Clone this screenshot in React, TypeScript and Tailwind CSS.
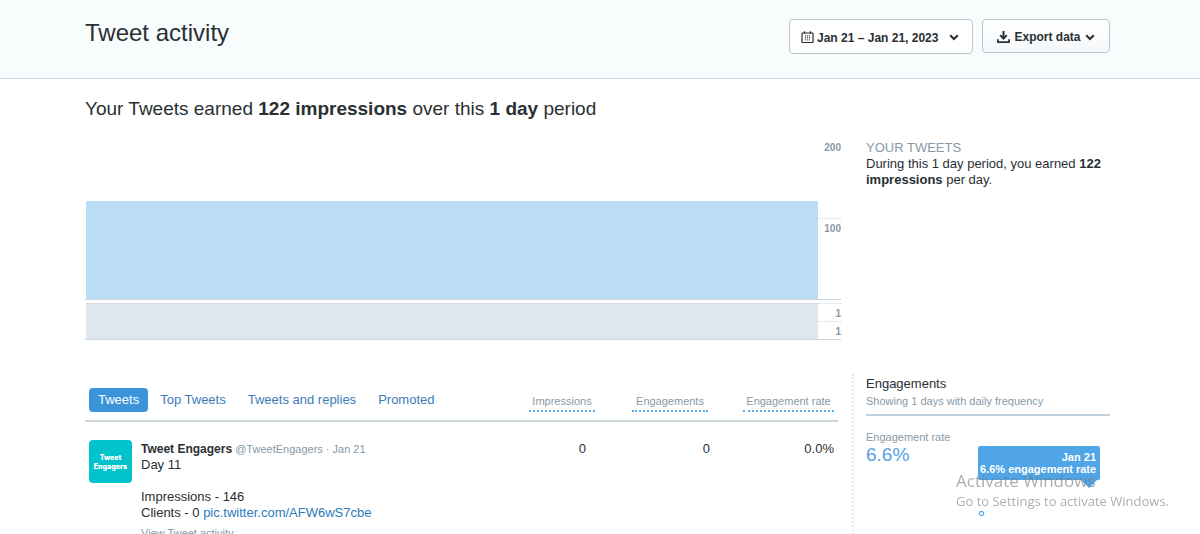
import React from 'react';

const tabs = ['Tweets', 'Top Tweets', 'Tweets and replies', 'Promoted'];

const CalendarIcon = () => (
  <svg width="13" height="13" viewBox="0 0 13 13" fill="none" stroke="#292f33" aria-hidden="true">
    <rect x="1" y="2" width="11" height="9.5" rx="0.6" strokeWidth="1.2" />
    <path d="M3.5 0.3v2.4M9.5 0.3v2.4" strokeWidth="1.2" />
    <path d="M4.5 4v6M6.5 4v6M8.5 4v6" stroke="#5d6468" strokeWidth="1.1" strokeDasharray="1.4 0.7" />
  </svg>
);

const DownloadIcon = () => (
  <svg width="13" height="13" viewBox="0 0 13 13" fill="none" stroke="#292f33" aria-hidden="true">
    <path d="M6.5 0v7.4" strokeWidth="2" />
    <path d="M3.2 4.2l3.3 3.4 3.3-3.4" strokeWidth="1.9" />
    <path d="M0.9 8.2v2.9h11.2V8.2" strokeWidth="1.8" strokeLinejoin="round" />
  </svg>
);

const Chevron = () => (
  <svg width="10" height="7" viewBox="0 0 10 7" fill="none" stroke="#292f33" aria-hidden="true">
    <path d="M1.2 1.2L5 5l3.8-3.8" strokeWidth="2" />
  </svg>
);

const Header = () => (
  <header className="border-b border-[#d5dde6] bg-[#f8fcfd]">
    <div className="mx-auto flex h-[78px] max-w-[1030px] items-start justify-between pr-[5px]">
      <h1 className="pt-[18px] text-[24px] leading-[30px]">Tweet activity</h1>
      <div className="flex items-start gap-[9px] pt-[19px] text-[12px] font-bold">
        <button className="flex h-[35px] w-[184px] items-center rounded-[4px] border border-[#b9c5ce] bg-white pl-[11px] pt-[2px]">
          <CalendarIcon />
          <span className="ml-[3px] mr-[11px]">Jan 21 – Jan 21, 2023</span>
          <Chevron />
        </button>
        <button className="flex h-[34px] w-[128px] items-center justify-center gap-[4px] rounded-[4px] border border-[#b9c5ce] bg-linear-to-b from-white to-[#f5f8fa] pt-[2px]">
          <DownloadIcon />
          Export data
          <Chevron />
        </button>
      </div>
    </div>
  </header>
);

const Chart = () => (
  <div className="mr-[11px] text-right text-[10px] font-bold leading-[12px] text-[#8899a6]">
    {/* impressions */}
    <div className="flex h-[162px] border-b border-[#ccd6dd] pl-px">
      <div className="flex flex-1 items-end">
        <div className="h-[98px] w-full bg-[#bbddf6]" />
      </div>
      <div className="w-[23px]">
        <div className="h-[80px] pt-[4px]">200</div>
        <div className="border-t border-dotted border-[#ccd6dd] pt-[4px]">100</div>
      </div>
    </div>
    {/* tweets */}
    <div className="mt-[3px] flex h-[37px] border-b border-[#ccd6dd] pl-px">
      <div className="flex-1 border-t border-dotted border-[#ccd6dd] bg-[#dfe6ed]" />
      <div className="w-[23px]">
        <div className="h-[18px] border-t border-dotted border-[#ccd6dd] pt-[4px]">1</div>
        <div className="border-t border-dotted border-[#ccd6dd] pt-[4px]">1</div>
      </div>
    </div>
  </div>
);

const headLabel =
  'inline-block whitespace-nowrap border-b-2 border-dotted border-[#55acee] text-center text-[11px] leading-[18px]';

const TweetTable = () => (
  <table className="w-full table-fixed border-collapse">
    <colgroup>
      <col />
      <col className="w-[110px]" />
      <col className="w-[115px]" />
      <col className="w-[128px]" />
    </colgroup>
    <thead>
      <tr className="h-[47px] border-b-2 border-[#ccd6dd] text-[#8899a6]">
        <th className="p-0 pl-[4px] pt-[5px] text-left font-normal">
          <nav className="flex items-center gap-[22px] whitespace-nowrap text-[13px] leading-[24px] text-[#3b7cb8]">
            {tabs.map((tab, i) => (
              <a
                key={tab}
                href="#"
                className={i === 0 ? '-mr-[10px] rounded-[4px] bg-[#3b94d9] px-[9px] text-white' : ''}
              >
                {tab}
              </a>
            ))}
          </nav>
        </th>
        <th className="p-0 pt-[5px] text-right font-normal">
          <span className={`${headLabel} w-[66px]`}>Impressions</span>
        </th>
        <th className="p-0 pr-[2px] pt-[5px] text-right font-normal">
          <span className={`${headLabel} w-[76px]`}>Engagements</span>
        </th>
        <th className="p-0 pr-[4px] pt-[5px] text-right font-normal">
          <span className={`${headLabel} w-[91px]`}>Engagement rate</span>
        </th>
      </tr>
    </thead>
    <tbody>
      <tr className="align-top text-[13px] leading-[20px]">
        <td className="pl-[4px] pt-[18px]">
          <div className="flex gap-[9px]">
            <div
              className="flex h-[43px] w-[43px] flex-col items-center justify-center rounded-[4px] bg-[#00c3cb] text-[7px] font-black leading-[9px] text-white"
              style={{ fontFamily: 'Inter, Lato, sans-serif' }}
            >
              <span>Tweet</span>
              <span>Engagers</span>
            </div>
            <div className="whitespace-nowrap pt-px text-[13px] leading-[16px]">
              <div className="text-[11px] text-[#8899a6]">
                <strong className="text-[12px] text-[#292f33]">Tweet Engagers</strong> @TweetEngagers · Jan 21
              </div>
              <p>Day 11</p>
              <p className="mt-[16px]">Impressions - 146</p>
              <p>
                Clients - 0 <a href="#" className="text-[#2b7bb9]">pic.twitter.com/AFW6wS7cbe</a>
              </p>
              <a href="#" className="mt-[4px] block text-[11px] text-[#8899a6]">View Tweet activity</a>
            </div>
          </div>
        </td>
        <td className="pr-[9px] pt-[17px] text-right">0</td>
        <td className="pt-[17px] text-right">0</td>
        <td className="pr-[4px] pt-[17px] text-right">0.0%</td>
      </tr>
    </tbody>
  </table>
);

const Engagements = () => (
  <aside className="border-l-2 border-dotted border-[#e1e8ed] pl-[12px]">
    <h3 className="pt-px text-[13px] leading-[18px]">Engagements</h3>
    <p className="border-b-2 border-[#c0d0dc] pb-[5px] text-[11px] leading-[16px] text-[#8899a6]">
      Showing 1 days with daily frequency
    </p>
    <div className="flex justify-between pt-[12px]">
      <div>
        <div className="text-[11px] leading-[18px] text-[#8899a6]">Engagement rate</div>
        <div className="text-[19px] leading-[18px] text-[#55a0e6]">6.6%</div>
      </div>
      <div className="relative mr-[10px] mt-[18px] h-[71px] w-[122px]">
        <div className="rounded-[2px] bg-[#50a5e6] py-[5px] pl-[2px] pr-[4px] text-right text-[11px] font-bold leading-[12px] text-white">
          Jan 21
          <br />
          <span className="whitespace-nowrap">6.6% engagement rate</span>
        </div>
        <svg className="absolute right-[3px] top-[34px]" width="16" height="8" viewBox="0 0 16 8" aria-hidden="true">
          <path d="M0 0h16L8 8z" fill="#50a5e6" />
        </svg>
        <svg className="absolute bottom-0 left-0" width="7" height="7" viewBox="0 0 7 7" aria-hidden="true">
          <circle cx="3.5" cy="3.5" r="2.2" fill="#fff" stroke="#55acee" strokeWidth="1.2" />
        </svg>
      </div>
    </div>
  </aside>
);

export default function App() {
  return (
    <div
      className="h-screen overflow-hidden bg-white text-[#292f33]"
      style={{ fontFamily: '"Liberation Sans", Arial, sans-serif' }}
    >
      <Header />
      <main className="mx-auto max-w-[1030px] pr-[5px]">
        <h2 className="pb-[17px] pt-[18px] text-[19px] leading-[24px]">
          Your Tweets earned <strong>122 impressions</strong> over this <strong>1 day</strong> period
        </h2>
        <section className="grid grid-cols-[1fr_258px]">
          <Chart />
          <div className="pl-[14px] pt-[2px]">
            <h3 className="text-[13px] leading-[16px] text-[#8899a6]">YOUR TWEETS</h3>
            <p className="text-[13px] leading-[16px]">
              During this 1 day period, you earned <strong>122 impressions</strong> per day.
            </p>
          </div>
        </section>
        <section className="mt-[34px] grid min-h-[180px] grid-cols-[1fr_258px]">
          <div className="pr-[14px]">
            <TweetTable />
          </div>
          <Engagements />
        </section>
      </main>
      <div
        className="pointer-events-none fixed bottom-[24px] right-[31px] whitespace-nowrap text-[#777]/60"
        style={{ fontFamily: '"Open Sans", "Noto Sans", sans-serif' }}
      >
        <div className="text-[17px] leading-[22px]">Activate Windows</div>
        <div className="text-[13px] leading-[18px]">Go to Settings to activate Windows.</div>
      </div>
    </div>
  );
}
